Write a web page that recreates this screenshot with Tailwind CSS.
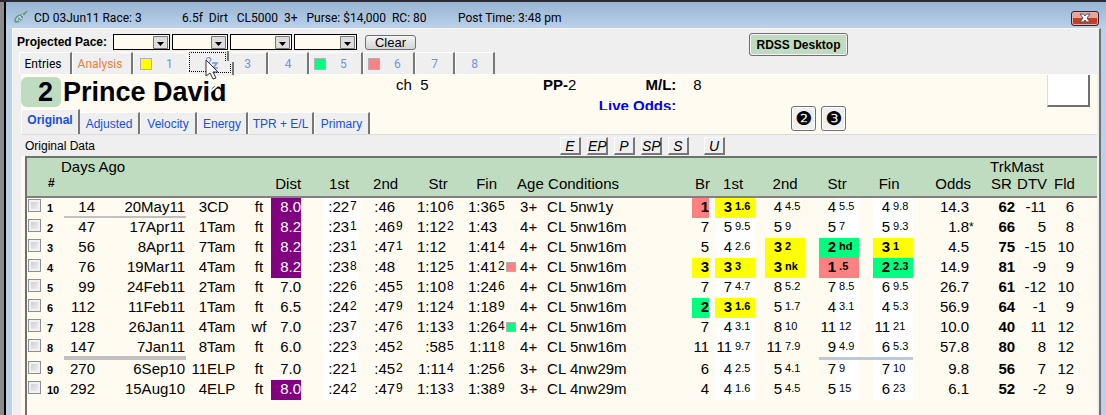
<!DOCTYPE html>
<html lang="en">
<head>
    <meta charset="UTF-8">
    <meta name="viewport" content="width=device-width, initial-scale=1.0">
    <title>CD 03Jun11 Race: 3</title>
    <script src="https://cdn.jsdelivr.net/npm/@tailwindcss/browser@4"></script>
</head>
<body class="min-h-screen flex flex-col overflow-hidden bg-[#b9d1ea] border-t-2 border-[#30282e] font-['Liberation_Sans',Arial,sans-serif] text-black">

    <div class="flex-grow flex flex-col border-l-4 border-[#8b8b8b]">
    <div class="flex-grow flex flex-col border-l-2 border-black pl-[6px] pr-[5px]">

        <!-- title bar -->
        <header class="-ml-[6px] -mr-[5px] h-[26px] pl-2 pr-[7px] flex items-center bg-linear-to-b from-[#98b4d2] to-[#b9d1ea] font-[Roboto,'Open_Sans',sans-serif] text-xs whitespace-pre">
            <svg class="mt-1 mr-[6px]" width="14" height="14" viewBox="0 0 14 14" fill="none">
                <path d="M1 12C1 7 3 6 7 5S12 2 13 1M1 12c4 0 6-1 7-4s2-4 5-7" stroke="#5d9a70" stroke-width="1.3"/>
                <path d="M3 8l3 3M5 6l3 3M8 4l2 3" stroke="#d9eadf"/>
                <path d="M4 9h2M7 7h1" stroke="#7040a0"/>
            </svg>
            <h1 class="w-[148px] mt-[6px]">CD 03Jun11 Race: 3</h1>
            <span class="w-[276px] mt-[6px]">6.5f  Dirt   CL5000  3+   Purse: $14,000  RC: 80</span>
            <span class="mt-[6px]">Post Time: 3:48 pm</span>
            <button aria-label="Close" class="ml-auto mt-[6px] w-7 h-[15px] flex items-center justify-center rounded-[3px] border border-[#4a1820] bg-linear-to-b from-[#e6a49c] from-50% to-[#bd4029] to-50% shadow-[inset_0_0_0_1px_#e8b0a8]">
                <svg width="12" height="10" viewBox="0 0 12 10"><path d="M1 1h3.500L6 3l1.500-2H11L8 5l3 4H7.500L6 7 4.500 9H1l3-4z" fill="#fff" stroke="#50505a"/></svg>
            </button>
        </header>

        <main class="flex-grow flex flex-col bg-[#efefef] border-t border-l border-[#fafafa] border-r-2 border-r-[#707070]">

            <div class="flex">
                <div class="w-[736px]">
                    <div class="h-[22px] flex items-center pl-1 pt-1 gap-[2px]">
                        <span class="w-[94px] text-xs font-bold">Projected Pace:</span>
                        <div class="relative w-[57px]">
                            <select aria-label="Projected pace 1" class="block w-full h-4 appearance-none bg-[#fffbf0] border border-black outline outline-black -outline-offset-1"><option></option></select>
                            <svg class="absolute right-[2px] top-[2px] pointer-events-none" width="15" height="13"><path d="M.5.5h14v12H.5z" fill="#ddd" stroke="#777"/><path d="M4 6h7l-3.500 4z"/></svg>
                        </div>
                        <div class="relative w-[56px]">
                            <select aria-label="Projected pace 2" class="block w-full h-4 appearance-none bg-[#fffbf0] border border-black outline outline-black -outline-offset-1"><option></option></select>
                            <svg class="absolute right-[2px] top-[2px] pointer-events-none" width="15" height="13"><path d="M.5.5h14v12H.5z" fill="#ddd" stroke="#777"/><path d="M4 6h7l-3.500 4z"/></svg>
                        </div>
                        <div class="relative w-[62px]">
                            <select aria-label="Projected pace 3" class="block w-full h-4 appearance-none bg-[#fffbf0] border border-black outline outline-black -outline-offset-1"><option></option></select>
                            <svg class="absolute right-[2px] top-[2px] pointer-events-none" width="15" height="13"><path d="M.5.5h14v12H.5z" fill="#ddd" stroke="#777"/><path d="M4 6h7l-3.500 4z"/></svg>
                        </div>
                        <div class="relative w-[63px]">
                            <select aria-label="Projected pace 4" class="block w-full h-4 appearance-none bg-[#fffbf0] border border-black outline outline-black -outline-offset-1"><option></option></select>
                            <svg class="absolute right-[2px] top-[2px] pointer-events-none" width="15" height="13"><path d="M.5.5h14v12H.5z" fill="#ddd" stroke="#777"/><path d="M4 6h7l-3.500 4z"/></svg>
                        </div>
                        <button class="ml-[6px] w-[51px] h-[15px] leading-[13px] text-[13px] rounded-[3px] border border-[#707070] bg-linear-to-b from-[#f4f4f4] to-[#d4d4d4]">Clear</button>
                    </div>

                    <!-- horse tabs -->
                    <nav class="h-[23px] pl-[6px] flex items-end font-[Roboto,'Open_Sans',sans-serif] text-xs text-[#6f93e8]">
                        <button class="w-[53px] h-[22px] pr-1 text-black border-t border-l border-white border-r-2 border-r-[#777]">Entries</button>
                        <button class="w-[61px] h-[22px] pr-1 text-[#ef7d3c] border-t border-l border-white border-r-2 border-r-[#777]">Analysis</button>
                        <button class="w-[54px] h-[22px] pl-[6px] flex items-center border-t border-l border-white"><span class="size-3 bg-[#ffff00] border border-[#b0b0b0]"></span><span class="ml-[14px]">1</span></button>
                        <button class="relative w-[42px] h-6 pb-[2px] border-t border-l border-white">2
                            <svg class="absolute left-0 top-0 overflow-visible z-10" width="54" height="52">
                                <path d="M40 0v10" stroke="#777" stroke-width="2"/>
                                <path d="M1.500 20V1.500H37.500V10" fill="none" stroke="#000" stroke-dasharray="1 1"/>
                                <path d="M1 20.500H20" stroke="#000" stroke-dasharray="1 1"/>
                                <path d="M21 12h26v13H21z" fill="#efefef"/>
                                <path d="M22 21.500H42.500V12" fill="none" stroke="#000" stroke-dasharray="1 1"/>
                                <path d="M45 11v13" stroke="#777" stroke-width="2"/>
                                <path d="M24 12h5l-4 5h5" fill="none" stroke="#6f93e8" stroke-width="1.500"/>
                                <path d="M29 25h11v8H29z" fill="#fffbf0"/>
                                <path d="M21 42l9-8" stroke="#fffbf0" stroke-width="2"/>
                                <path d="M18 9v16l4-3 3 6 3-1-3-6h5z" fill="#fff" stroke="#3a2838"/>
                            </svg>
                        </button>
                        <button class="w-[39px] h-[22px] border-t border-white border-r-2 border-r-[#777]">3</button>
                        <button class="w-[41px] h-[22px] border-t border-l border-white border-r-2 border-r-[#777]">4</button>
                        <button class="w-[54px] h-[22px] pl-1 flex items-center border-t border-l border-white border-r-2 border-r-[#777]"><span class="size-3 bg-[#00ff80] border border-[#b0b0b0]"></span><span class="ml-[14px]">5</span></button>
                        <button class="w-[52px] h-[22px] pl-1 flex items-center border-t border-l border-white border-r-2 border-r-[#777]"><span class="size-3 bg-[#ff8080] border border-[#b0b0b0]"></span><span class="ml-[14px]">6</span></button>
                        <button class="w-10 h-[22px] border-t border-l border-white border-r-2 border-r-[#777]">7</button>
                        <button class="w-10 h-[22px] border-t border-l border-white border-r-2 border-r-[#777]">8</button>
                    </nav>
                </div>
                <button class="mt-1 w-[99px] h-[23px] text-xs font-bold bg-[#c0dcc0] rounded-[3px] border border-[#707070] shadow-[inset_0_0_0_1px_#f4f4f4]">RDSS Desktop</button>
            </div>

            <div class="flex-grow flex flex-col ml-2 mr-[2px] border-t border-white">

                <!-- selected horse -->
                <section class="h-[59px] flex bg-[#fffbf0]">
                    <div class="w-[375px] flex flex-col justify-between">
                        <div class="flex items-center pt-[2px] text-[27px] leading-[30px] font-bold">
                            <span class="w-10 h-[30px] pr-2 text-right rounded-md bg-[#c0dcc0]">2</span>
                            <h2 class="ml-[2px]">Prince David</h2>
                        </div>
                        <nav class="h-[25px] flex items-end text-xs text-[#1550e8]">
                            <button class="w-[59px] h-[25px] pb-1 font-bold bg-[#efefef] border-t border-l border-white border-r-2 border-r-[#777]">Original</button>
                            <button class="w-[60px] h-[22px] bg-[#efefef] border-t border-white border-r-2 border-r-[#777]">Adjusted</button>
                            <button class="w-[57px] h-[22px] bg-[#efefef] border-t border-l border-white border-r-2 border-r-[#777]">Velocity</button>
                            <button class="w-[51px] h-[22px] bg-[#efefef] border-t border-l border-white border-r-2 border-r-[#777]">Energy</button>
                            <button class="w-[66px] h-[22px] whitespace-nowrap bg-[#efefef] border-t border-l border-white border-r-2 border-r-[#777]">TPR + E/L</button>
                            <button class="w-[56px] h-[22px] bg-[#efefef] border-t border-l border-white border-r-2 border-r-[#777]">Primary</button>
                        </nav>
                    </div>
                    <div class="w-[147px] pt-[1px] text-[15px] leading-[18px] whitespace-pre">ch  5</div>
                    <div class="pt-[1px] text-[15px] leading-[18px]"><b>PP-</b>2</div>
                    <dl class="w-[138px] pt-[1px] grid grid-cols-[100px_1fr] content-start text-[15px] leading-[18px]">
                        <dt class="text-right font-bold">M/L:</dt><dd class="pl-[17px]">8</dd>
                        <dt class="mt-[7px] h-[9px] overflow-hidden flex items-center justify-end whitespace-nowrap font-bold text-[#0000ff]">Live Odds:</dt>
                    </dl>
                    <div class="ml-[77px] pt-[31px] flex gap-[5px]">
                        <button class="size-[25px] flex items-center justify-center font-['DejaVu_Sans',sans-serif] text-[19px] rounded-[3px] border border-[#707070] bg-[#efefef] shadow-[inset_0_0_0_1px_#fff]">❷</button>
                        <button class="size-[25px] flex items-center justify-center font-['DejaVu_Sans',sans-serif] text-[19px] rounded-[3px] border border-[#707070] bg-[#efefef] shadow-[inset_0_0_0_1px_#fff]">❸</button>
                    </div>
                    <div class="ml-auto mr-[7px] w-[43px] h-8 bg-white border-l border-l-[#ddd] border-r-2 border-b-2 border-r-[#707070] border-b-[#707070]"></div>
                </section>

                <section class="h-[22px] pl-1 flex items-center border-t border-[#dcdcdc]">
                    <h3 class="w-[535px] text-xs">Original Data</h3>
                    <div class="flex gap-[6px] italic text-sm leading-4">
                        <button class="w-[21px] h-[18px] border border-white border-r-2 border-b-2 border-r-[#777] border-b-[#777]">E</button>
                        <button class="w-[21px] h-[18px] border border-white border-r-2 border-b-2 border-r-[#777] border-b-[#777]">EP</button>
                        <button class="w-[21px] h-[18px] border border-white border-r-2 border-b-2 border-r-[#777] border-b-[#777]">P</button>
                        <button class="w-[21px] h-[18px] border border-white border-r-2 border-b-2 border-r-[#777] border-b-[#777]">SP</button>
                        <button class="w-[21px] h-[18px] border border-white border-r-2 border-b-2 border-r-[#777] border-b-[#777]">S</button>
                        <button class="ml-[9px] w-[21px] h-[18px] border border-white border-r-2 border-b-2 border-r-[#777] border-b-[#777]">U</button>
                    </div>
                </section>

                <!-- past performances -->
                <section class="flex-grow flex pl-1 bg-[#fffbf0]">
                    <div class="flex-grow border-l-2 border-t-2 border-[#707070]">
                        <table class="w-full table-fixed border-separate border-spacing-0 text-[15px] leading-[18px] whitespace-nowrap">
                            <colgroup id="cols"></colgroup>
                            <thead class="bg-[#c0dcc0] text-left">
                                <tr class="h-[17px] leading-[17px]">
                                    <th colspan="8" class="pl-[34px] font-normal">Days Ago</th>
                                    <th colspan="27"></th>
                                    <th colspan="4" class="pl-[11px] font-normal">TrkMast</th>
                                </tr>
                                <tr class="h-[23px] leading-[17px] align-top">
                                    <th class="border-b-2 border-[#808080]"></th>
                                    <th colspan="6" class="pl-1 text-xs leading-[17px] border-b-2 border-[#808080]">#</th>
                                    <th class="font-normal text-right border-b-2 border-[#808080]">Dist</th>
                                    <th class="border-b-2 border-[#808080]"></th>
                                    <th colspan="2" class="pr-1 font-normal text-center border-b-2 border-[#808080]">1st</th>
                                    <th colspan="2" class="pl-1 font-normal text-center border-b-2 border-[#808080]">2nd</th>
                                    <th colspan="2" class="pl-2 font-normal text-center border-b-2 border-[#808080]">Str</th>
                                    <th colspan="3" class="pr-1 font-normal text-center border-b-2 border-[#808080]">Fin</th>
                                    <th class="font-normal border-b-2 border-[#808080]">Age</th>
                                    <th class="pl-[3px] font-normal border-b-2 border-[#808080]">Conditions</th>
                                    <th colspan="2" class="pl-[3px] font-normal border-b-2 border-[#808080]">Br</th>
                                    <th colspan="2" class="pr-1 font-normal text-center border-b-2 border-[#808080]">1st</th>
                                    <th class="border-b-2 border-[#808080]"></th>
                                    <th colspan="2" class="font-normal text-center border-b-2 border-[#808080]">2nd</th>
                                    <th class="border-b-2 border-[#808080]"></th>
                                    <th colspan="2" class="pr-1 font-normal text-center border-b-2 border-[#808080]">Str</th>
                                    <th class="border-b-2 border-[#808080]"></th>
                                    <th colspan="2" class="pr-2 font-normal text-center border-b-2 border-[#808080]">Fin</th>
                                    <th colspan="2" class="pr-2 font-normal text-right border-b-2 border-[#808080]">Odds</th>
                                    <th class="pl-3 font-normal border-b-2 border-[#808080]">SR</th>
                                    <th class="pl-[2px] font-normal border-b-2 border-[#808080]">DTV</th>
                                    <th colspan="2" class="pl-2 font-normal border-b-2 border-[#808080]">Fld</th>
                                </tr>
                            </thead>
                            <tbody id="races"></tbody>
                        </table>
                    </div>
                </section>
            </div>
        </main>
    </div>
    </div>

    <script>
        // 0 = takes whatever is left over
        const widths = [17, 20, 32, 90, 21, 40, 24, 30, 22, 26, 10, 36, 13, 38, 14, 37, 9, 11, 28, 147, 17, 6,
            17, 23, 10, 17, 23, 14, 17, 23, 14, 17, 23, 56, 10, 36, 31, 28, 0];

        const fills = {
            y: 'bg-[#ffff00] font-bold',
            g: 'bg-[#00ff80] font-bold',
            r: 'bg-[#ff8080] font-bold',
            w: 'bg-white'
        };
        const marks = { g: 'bg-[#00ff80]', r: 'bg-[#ff8080]' };

        // days, date, race, track, going, dist, times, mark, age, conditions, break, calls, odds, SR, DTV, field
        const races = [
            [14, '20May11', 3, 'CD', 'ft', '8.0', [':22 7', ':46', '1:10 6', '1:36 5'], '', '3+', 'CL 5nw1y', '1 r', ['3 1.6 y', '4 4.5', '4 5.5', '4 9.8'], '14.3', 62, -11, 6],
            [47, '17Apr11', 1, 'Tam', 'ft', '8.2', [':23 1', ':46 9', '1:12 2', '1:43'], '', '4+', 'CL 5nw16m', '7', ['5 9.5', '5 9', '5 7', '5 9.3'], '1.8*', 66, 5, 8],
            [56, '8Apr11', 7, 'Tam', 'ft', '8.2', [':23 1', ':47 1', '1:12', '1:41 4'], '', '4+', 'CL 5nw16m', '5', ['4 2.6', '3 2 y', '2 hd g', '3 1 y'], '4.5', 75, -15, 10],
            [76, '19Mar11', 4, 'Tam', 'ft', '8.2', [':23 8', ':48', '1:12 5', '1:41 2'], 'r', '4+', 'CL 5nw16m', '3 y', ['3 3 y', '3 nk y', '1 .5 r', '2 2.3 g'], '14.9', 81, -9, 9],
            [99, '24Feb11', 2, 'Tam', 'ft', '7.0', [':22 6', ':45 5', '1:10 8', '1:24 6'], '', '4+', 'CL 5nw16m', '7', ['7 4.7', '8 5.2', '7 8.5', '6 9.5'], '26.7', 61, -12, 10],
            [112, '11Feb11', 1, 'Tam', 'ft', '6.5', [':24 2', ':47 9', '1:12 4', '1:18 9'], '', '4+', 'CL 5nw16m', '2 g', ['3 1.6 y', '5 1.7', '4 3.1', '4 5.3'], '56.9', 64, -1, 9],
            [128, '26Jan11', 4, 'Tam', 'wf', '7.0', [':23 7', ':47 6', '1:13 3', '1:26 4'], 'g', '4+', 'CL 5nw16m', '7', ['4 3.1', '8 10', '11 12', '11 21'], '10.0', 40, 11, 12],
            [147, '7Jan11', 8, 'Tam', 'ft', '6.0', [':22 3', ':45 2', ':58 5', '1:11 8'], '', '4+', 'CL 5nw16m', '11', ['11 9.7', '11 7.9', '9 4.9', '6 5.3'], '57.8', 80, 8, 12],
            [270, '6Sep10', 11, 'ELP', 'ft', '7.0', [':22 1', ':45 2', '1:11 4', '1:25 6'], '', '3+', 'CL 4nw29m', '6', ['4 2.5', '5 4.1', '7 9', '7 10'], '9.8', 56, 7, 12],
            [292, '15Aug10', 4, 'ELP', 'ft', '8.0', [':24 2', ':47 9', '1:13 3', '1:38 9'], '', '3+', 'CL 4nw29m', '4', ['4 1.6', '5 4.5', '5 15', '6 23'], '6.1', 52, -2, 9]
        ];

        const td = (text, cls) => `<td class="${cls}">${text}</td>`;

        function raceRow(race, i) {
            const [days, date, num, track, going, dist, times, mark, age, cond, brk, calls, odds, sr, dtv, fld] = race;
            const layoff = i === 0 ? 'border-b-2 border-[#c0c0c0]' : i === 7 ? 'border-b-4 border-[#c0c0c0]' : '';
            const callLine = i === 7 ? 'border-b-3 border-[#b9c9d9]' : '';
            const [brkPos, brkFill] = brk.split(' ');

            let html = td(`<input type="checkbox" aria-label="Race ${i + 1}" class="block ml-px mt-px size-[13px] appearance-none border border-[#8e8f8f] bg-linear-to-br from-[#c4c8cc] to-[#f6f6f6] shadow-[inset_0_0_0_2px_#f2f2f2]">`, '');
            html += td(i + 1, 'pl-[3px] text-[11px] leading-[20px] font-bold');
            html += td(days, `text-right pr-px ${layoff}`) + td(date, `text-right pr-px ${layoff}`);
            html += td(num, 'text-right') + td(track, '') + td(going, 'text-center');
            html += td(dist, `text-right ${parseFloat(dist) >= 8 ? 'bg-[#800080] text-white' : ''}`) + td('', '');

            times.forEach((time, n) => {
                const [main, tenth = ''] = time.split(' ');
                const fill = n === 0 ? fills.w : '';
                html += td(main, `text-right ${fill}`) + td(tenth, `pl-px text-xs leading-[17px] ${fill}`);
            });
            html += td(mark ? `<div class="mt-1 size-[10px] border border-[#b0b0b0] ${marks[mark]}"></div>` : '', '');
            html += td(age, 'pl-[3px]') + td(cond, 'pl-[2px]');
            html += td(brkPos, `text-right ${fills[brkFill] || ''}`) + td('', '');

            calls.forEach((call, n) => {
                const [pos, len, fill] = call.split(' ');
                const posFill = fills[fill] || (n === 0 || n === 3 ? fills.w : '');
                const lenFill = fills[fill] || (n !== 1 ? fills.w : '');
                const line = n > 1 ? callLine : '';
                html += td(pos, `text-right ${posFill} ${line}`) + td(len, `pl-[3px] text-[11px] leading-[17px] ${lenFill} ${line}`);
                if (n < 3) html += td('', n === 2 ? line : '');
            });

            html += td(odds.replace('*', ''), 'text-right') + td(odds.endsWith('*') ? '*' : '', 'text-xs leading-[18px]');
            html += td(sr, 'text-right font-bold') + td(dtv, 'text-right') + td(fld, 'text-right') + td('', '');
            return `<tr class="align-top ${i === 7 ? 'h-[21px]' : 'h-[20px]'}">${html}</tr>`;
        }

        document.getElementById('cols').innerHTML = widths.map(w => w ? `<col style="width:${w}px">` : '<col>').join('');
        document.getElementById('races').innerHTML = races.map(raceRow).join('');
    </script>
</body>
</html>
